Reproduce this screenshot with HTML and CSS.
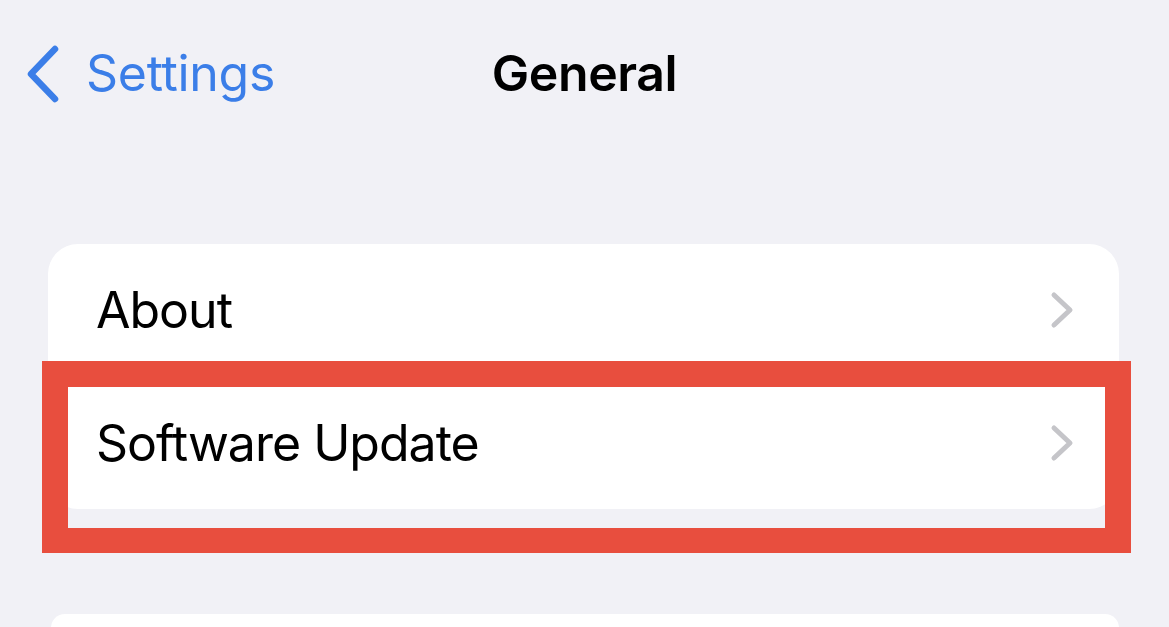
FILE: index.html
```html
<!DOCTYPE html>
<html lang="en">
<head>
  <meta charset="UTF-8">
  <meta name="viewport" content="width=device-width, initial-scale=1.0">
  <title>General</title>
  <link rel="stylesheet" href="styles.css">
</head>
<body>
  <header class="nav-bar">
    <a class="back-link" href="#">
      <svg class="back-chevron" width="36" height="58" viewBox="0 0 36 58">
        <path d="M31 4 L7 29 L31 54" fill="none" stroke="currentColor" stroke-width="6.5" stroke-linecap="round" stroke-linejoin="round"/>
      </svg>
      <span>Settings</span>
    </a>
    <h1 class="nav-title">General</h1>
    <div></div>
  </header>

  <main class="content">
    <section class="group">
      <a class="row" href="#">
        <span class="row-label">About</span>
        <svg class="row-chevron" width="26" height="38" viewBox="0 0 26 38">
          <path d="M5 4 L21 19 L5 34" fill="none" stroke="currentColor" stroke-width="5" stroke-linecap="round" stroke-linejoin="round"/>
        </svg>
      </a>
      <a class="row" href="#">
        <span class="row-label">Software Update</span>
        <svg class="row-chevron" width="26" height="38" viewBox="0 0 26 38">
          <path d="M5 4 L21 19 L5 34" fill="none" stroke="currentColor" stroke-width="5" stroke-linecap="round" stroke-linejoin="round"/>
        </svg>
      </a>
    </section>

    <section class="group group-next"></section>

    <!-- annotation drawn over the screenshot -->
    <div class="highlight"></div>
  </main>
</body>
</html>
```

FILE: styles.css
```css
html {
  overflow: hidden;
}
body {
  margin: 0;
  padding: 0;
  background-color: #f1f1f6;
  font-family: Inter, "Noto Sans", sans-serif;
  color: #000;
  height: 627px;
  overflow: hidden;
}
.nav-bar {
  display: grid;
  grid-template-columns: 1fr auto 1fr;
  align-items: center;
  height: 146px;
  padding: 0 24px;
}
.back-link {
  display: flex;
  align-items: center;
  gap: 26px;
  color: #3b7ee8;
  text-decoration: none;
  font-size: 50px;
  letter-spacing: -0.3px;
}
.back-chevron {
  margin-top: 2px;
}
.nav-title {
  margin: 0;
  font-size: 50px;
  font-weight: 600;
  letter-spacing: -0.4px;
}
.content {
  position: relative;
  padding: 98px 50px 0 48px;
}
.group {
  background: #fff;
  border-radius: 30px;
  overflow: hidden;
}
.row {
  display: flex;
  align-items: center;
  justify-content: space-between;
  height: 132px;
  padding: 0 44px 0 48px;
  color: #000;
  text-decoration: none;
}
.row + .row {
  border-top: 1px solid #e3e3e8;
}
.row-label {
  font-size: 50px;
  letter-spacing: -1px;
}
.row-chevron {
  color: #c5c5c9;
}
.group-next {
  margin-top: 105px;
  margin-left: 3px;
  height: 14px;
  border-radius: 30px 30px 0 0;
}
.highlight {
  position: absolute;
  left: 42px;
  top: 215px;
  width: 1037px;
  height: 141px;
  border: 26px solid #e84e3e;
  border-bottom-width: 25px;
}
```
